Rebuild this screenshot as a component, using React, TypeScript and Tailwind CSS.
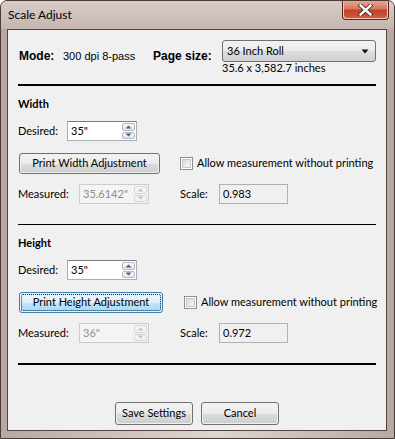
import React from "react";

const seg = "font-['Lato',sans-serif] text-[11px] whitespace-nowrap";

function Spin({ value, disabled }: { value: string; disabled?: boolean }) {
  return (
    <div
      className={`w-[70px] h-[20px] flex border ${
        disabled ? "border-[#c9ccd0] bg-[#f4f4f4]" : "border-[#abadb3] border-t-[#7a7d84] bg-white"
      }`}
    >
      <div
        className={`flex-1 pl-[3px] leading-[18px] ${seg} ${disabled ? "text-[#8d8d8d]" : "text-black"}`}
      >
        {value}
      </div>
      <div className="w-[15px] flex flex-col gap-[1px] p-[1px]">
        {[0, 1].map((i) => (
          <div
            key={i}
            className={`flex-1 rounded-[2px] border flex items-center justify-center ${
              disabled
                ? "border-[#d5d5d5] bg-[#f4f4f4]"
                : "border-[#b4b8bf] bg-[linear-gradient(#f7f7f7,#e3e5e8)]"
            }`}
          >
            <svg width="7" height="4" viewBox="0 0 7 4">
              {i === 0 ? (
                <path d="M0.5 3.5 L3.5 0.5 L6.5 3.5 Z" fill={disabled ? "#c4c4c4" : "#4a5d86"} />
              ) : (
                <path d="M0.5 0.5 L3.5 3.5 L6.5 0.5 Z" fill={disabled ? "#c4c4c4" : "#4a5d86"} />
              )}
            </svg>
          </div>
        ))}
      </div>
    </div>
  );
}

function Check() {
  return (
    <div className="w-[13px] h-[13px] shrink-0 border border-[#8e8f8f] bg-white p-[1px]">
      <div className="w-full h-full border border-[#c8c8c8] bg-[linear-gradient(135deg,#dcdcdc,#f6f6f6)]" />
    </div>
  );
}

function WinButton({
  children,
  w,
  h = 21,
  focused,
}: {
  children: React.ReactNode;
  w: string;
  h?: number;
  focused?: boolean;
}) {
  return (
    <div
      className={`${w} shrink-0 rounded-[3px] border p-[1px] ${
        focused ? "border-[#3c7fb1]" : "border-[#707070]"
      }`}
      style={{ height: h }}
    >
      <div
        className={`w-full h-full rounded-[2px] flex items-center justify-center ${seg} text-black ${
          focused
            ? "bg-[linear-gradient(#eaf6fd_0%,#d9f0fc_50%,#bee6fd_51%,#a7d9f5_100%)] outline-dotted outline-1 outline-[#222] -outline-offset-[1px]"
            : "bg-[linear-gradient(#f2f2f2_0%,#ebebeb_50%,#dddddd_51%,#cfcfcf_100%)]"
        }`}
      >
        {children}
      </div>
    </div>
  );
}

function Section({
  title,
  btn,
  btnW,
  measured,
  scale,
  focused,
  gap,
}: {
  title: string;
  btn: string;
  btnW: string;
  measured: string;
  scale: string;
  focused?: boolean;
  gap: string;
}) {
  return (
    <div className="flex flex-col">
      <div className="mt-[11px] leading-[14px] font-['Lato',sans-serif] text-[11px] font-bold text-black">
        {title}
      </div>
      <div className="mt-[10px] flex items-center h-[20px]">
        <div className={`w-[49px] ${seg} text-black`}>Desired:</div>
        <Spin value={'35"'} />
      </div>
      <div className="mt-[12px] flex items-center h-[21px] pl-[1px]">
        <WinButton w={btnW} focused={focused}>
          {btn}
        </WinButton>
        <div className={`flex items-center ${gap}`}>
          <Check />
          <div className={`ml-[4px] ${seg} text-black`}>Allow measurement without printing</div>
        </div>
      </div>
      <div className="mt-[10px] flex items-center h-[20px]">
        <div className={`w-[61px] ${seg} text-black`}>Measured:</div>
        <Spin value={measured} disabled />
        <div className={`ml-[31px] w-[39px] ${seg} text-black`}>Scale:</div>
        <div className={`w-[69px] h-[20px] border border-[#adb2b5] bg-[#f0f0f0] pl-[3px] leading-[18px] ${seg} text-black`}>
          {scale}
        </div>
      </div>
    </div>
  );
}

export default function App() {
  return (
    <div className="w-[395px] h-[439px] flex flex-col rounded-t-[7px] border border-[#4a3b37] bg-[linear-gradient(90deg,#b9a7a1,#cfc3bf_30%,#ddd5d2_55%,#c9bcb7_80%,#b8a8a3)] overflow-hidden">
      {/* title bar */}
      <div className="h-[28px] flex justify-between items-start bg-[linear-gradient(#d8cdc9,#cdbfba_60%,#c4b4af)]">
        <div className="ml-[7px] mt-[6px] font-['Lato',sans-serif] text-[12px] text-black leading-[16px]">
          Scale Adjust
        </div>
        <div className="mr-[5px] w-[47px] h-[19px] rounded-b-[4px] border border-t-0 border-[#5b241b] p-[1px] pt-0 bg-[#f3c7bc]">
          <div className="w-full h-full rounded-b-[3px] bg-[linear-gradient(#e9a593_0%,#d9785f_45%,#c2412a_55%,#d45a3e_100%)] flex items-center justify-center">
            <svg width="15" height="12" viewBox="0 0 15 12">
              <path
                d="M2.5 1.5 L12.5 10.5 M12.5 1.5 L2.5 10.5"
                stroke="#4a2a26"
                strokeWidth="4.2"
                strokeLinecap="square"
              />
              <path
                d="M2.5 1.5 L12.5 10.5 M12.5 1.5 L2.5 10.5"
                stroke="#ffffff"
                strokeWidth="2.4"
                strokeLinecap="square"
              />
            </svg>
          </div>
        </div>
      </div>
      {/* client */}
      <div className="ml-[6px] mr-[7px] mb-[7px] flex-1 border border-[#55433f] bg-[#f0f0f0] px-[10px] flex flex-col">
        <div className="h-[54px] pt-[10px] flex items-start pl-[1px]">
          <div className="w-[44px] mt-[9px] leading-[14px] font-['Liberation_Sans',Arial,sans-serif] text-[12px] font-bold text-black">
            Mode:
          </div>
          <div className="w-[90px] mt-[9px] leading-[14px] font-['Liberation_Sans',Arial,sans-serif] text-[11px] text-black">
            300 dpi 8-pass
          </div>
          <div className="w-[69px] mt-[9px] leading-[14px] font-['Liberation_Sans',Arial,sans-serif] text-[12px] font-bold text-black">
            Page size:
          </div>
          <div className="flex flex-col">
            <div className="w-[154px] h-[22px] rounded-[3px] border border-[#707070] bg-[linear-gradient(#f2f2f2_0%,#ebebeb_50%,#dddddd_51%,#cfcfcf_100%)] flex items-center justify-between pl-[4px] pr-[6px]">
              <span className={`${seg} text-black`}>36 Inch Roll</span>
              <svg width="8" height="5" viewBox="0 0 8 5">
                <path d="M0.5 0.5 L7.5 0.5 L4 4.5 Z" fill="#111" />
              </svg>
            </div>
            <div className={`leading-[12px] ${seg} text-black`}>35.6 x 3,582.7 inches</div>
          </div>
        </div>
        <div className="h-[2px] bg-black" />
        <Section
          title="Width"
          btn="Print Width Adjustment"
          btnW="w-[141px]"
          measured={'35.6142"'}
          scale="0.983"
          gap="ml-[20px]"
        />
        <div className="mt-[19px] h-[2px] flex flex-col justify-center">
          <div className="h-[1px] bg-black" />
        </div>
        <Section
          title="Height"
          btn="Print Height Adjustment"
          btnW="w-[144px]"
          measured={'36"'}
          scale="0.972"
          focused
          gap="ml-[21px]"
        />
        <div className="mt-[20px] h-[2px] bg-black" />
        <div className="mt-[37px] flex justify-center gap-[8px]">
          <WinButton w="w-[78px]" h={23}>
            Save Settings
          </WinButton>
          <WinButton w="w-[78px]" h={23}>
            Cancel
          </WinButton>
        </div>
      </div>
    </div>
  );
}
